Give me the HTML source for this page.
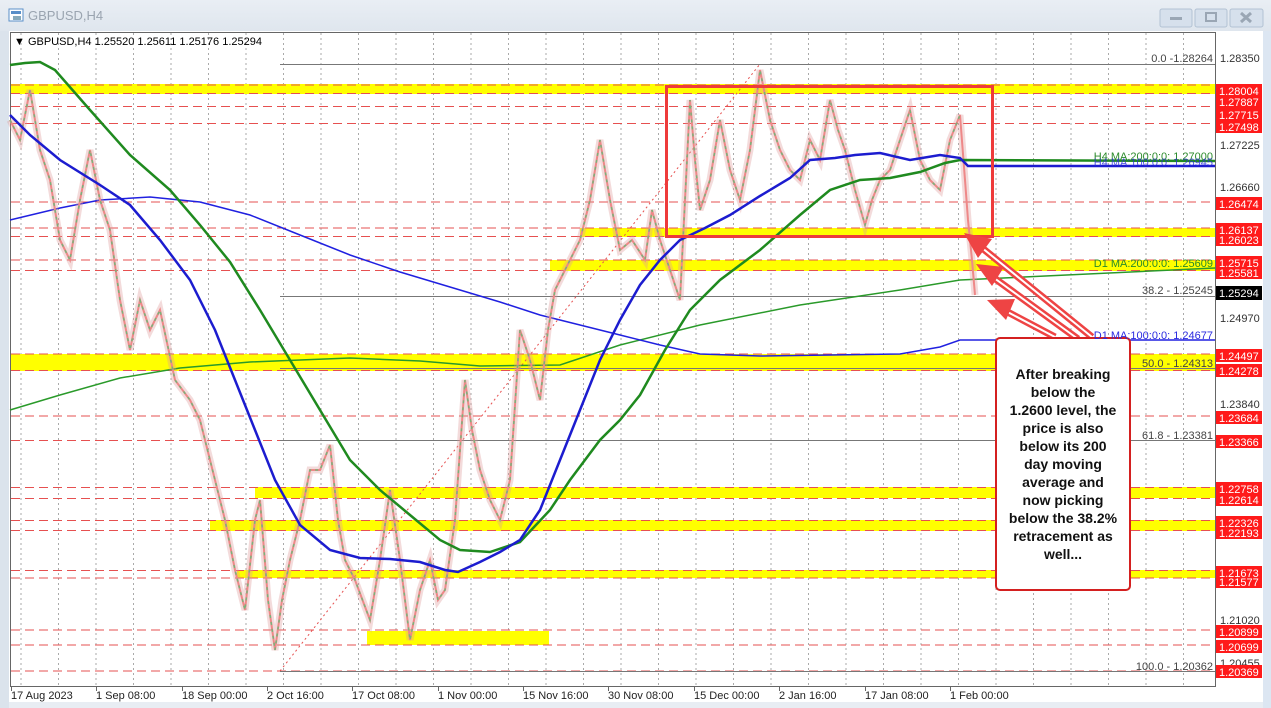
<!DOCTYPE html>
<html><head><meta charset="utf-8"><style>
html,body{margin:0;padding:0;width:1271px;height:708px;overflow:hidden;background:#dbe3ec;font-family:"Liberation Sans",sans-serif}
</style></head><body>
<svg width="1271" height="708" xmlns="http://www.w3.org/2000/svg" style="position:absolute;left:0;top:0">
<defs><linearGradient id="tb" x1="0" y1="0" x2="0" y2="1"><stop offset="0" stop-color="#e9eef4"/><stop offset="1" stop-color="#dfe6ee"/></linearGradient></defs>
<rect x="0" y="0" width="1271" height="708" fill="#dbe3ec"/>
<rect x="0" y="0" width="1271" height="31" fill="url(#tb)"/>
<rect x="9" y="9" width="14" height="12" fill="#fff" stroke="#5a8fc8"/><rect x="11" y="11" width="10" height="3" fill="#5a8fc8"/><rect x="13" y="16" width="8" height="4" fill="#8ab"/>
<text x="28" y="20" font-size="13" fill="#9aa4b0">GBPUSD,H4</text>
<rect x="1160" y="9" width="32" height="18" rx="2" fill="#d6e0ec" stroke="#b3c2d3"/><rect x="1170" y="17" width="12" height="3" fill="#9aa6b4"/>
<rect x="1195" y="9" width="32" height="18" rx="2" fill="#d6e0ec" stroke="#b3c2d3"/><rect x="1206" y="13" width="10" height="8" fill="none" stroke="#9aa6b4" stroke-width="2"/>
<rect x="1230" y="9" width="33" height="18" rx="2" fill="#d6e0ec" stroke="#b3c2d3"/><path d="M1241 13 L1251 22 M1251 13 L1241 22" stroke="#9aa6b4" stroke-width="3"/>
<rect x="9" y="31" width="1254" height="671" fill="#fff"/>
<rect x="1263" y="31" width="8" height="677" fill="#dce6f2"/>
<rect x="9" y="702" width="1254" height="6" fill="#e8edf3"/>
<line x1="10.5" y1="32" x2="10.5" y2="687" stroke="#666"/>
<line x1="10" y1="32.5" x2="1215" y2="32.5" stroke="#666"/>
<line x1="1215.5" y1="32" x2="1215.5" y2="687" stroke="#666"/>
<line x1="10" y1="686.5" x2="1216" y2="686.5" stroke="#666"/>
<g stroke="#aaa" stroke-dasharray="2,3" stroke-width="1">
<path d="M21 33V686M58.5 33V686M96 33V686M133.5 33V686M171 33V686M208.5 33V686M246 33V686M283.5 33V686M321 33V686M358.5 33V686M396 33V686M433.5 33V686M471 33V686M508.5 33V686M546 33V686M583.5 33V686M621 33V686M658.5 33V686M696 33V686M733.5 33V686M771 33V686M808.5 33V686M846 33V686M883.5 33V686M921 33V686M958.5 33V686M996 33V686M1033.5 33V686M1071 33V686M1108.5 33V686M1146 33V686M1183.5 33V686"/>
</g>
<g fill="#ffff00">
<rect x="11" y="84" width="1204" height="10"/>
<rect x="580" y="228" width="635" height="9"/>
<rect x="550" y="260" width="665" height="11"/>
<rect x="11" y="354" width="1204" height="17"/>
<rect x="255" y="487" width="960" height="11"/>
<rect x="210" y="520" width="1005" height="11"/>
<rect x="237" y="570" width="978" height="8"/>
<rect x="367" y="631" width="182" height="14"/>
</g>
<g stroke="#e65050" stroke-dasharray="9,5" stroke-width="1">
<path d="M11 85H1215M11 93.5H1215M11 106.5H1215M11 123.5H1215M11 202H1215M11 228H1215M11 236.5H1215M11 260H1215M11 270.5H1215M11 354H1215M11 370.5H1215M11 416H1215M11 440.5H1215M11 487.5H1215M11 498.5H1215M11 520.5H1215M11 530.5H1215M11 570.5H1215M11 578H1215M11 630H1215M11 645H1215M11 671H1215"/>
</g>
<g stroke="#777" stroke-width="1">
<path d="M280 64.5H1215M280 296.5H1215M280 368.5H1215M280 440.5H1215M280 671.5H1215"/>
</g>
<path d="M280 671 L760 64" stroke="#e65050" stroke-dasharray="2,3" fill="none"/>
<polyline fill="none" stroke="#2a9a2a" stroke-width="1.5" points="10,410 60,395 120,378 180,368 250,362 300,360 350,358 420,361 480,366 560,365 620,345 700,325 800,305 900,290 960,280 1215,268"/>
<polyline fill="none" stroke="#2020e0" stroke-width="1.5" points="10,220 60,208 100,200 150,197 200,202 250,215 300,235 350,255 400,272 450,287 500,302 540,315 580,325 620,335 660,345 700,354 760,356 900,354 940,347 960,340 1215,340"/>
<polyline fill="none" stroke="#d99" stroke-width="7" stroke-opacity="0.35" points="10,120 20,140 30,90 40,150 50,180 60,240 70,260 80,200 90,150 100,200 110,230 120,300 130,350 140,300 150,330 160,310 175,380 190,400 200,420 210,460 215,480 225,520 235,570 245,610 255,520 260,500 268,600 275,650 282,600 290,560 300,520 310,470 320,470 330,445 338,520 345,560 355,580 370,620 380,560 390,490 400,560 410,640 420,590 430,560 438,600 445,590 455,520 465,380 472,430 480,470 490,500 500,520 510,480 520,330 530,360 540,400 548,330 555,290 565,270 580,240 590,200 600,140 610,200 620,250 632,240 645,260 652,210 660,240 670,270 680,300 685,200 690,100 695,160 700,210 710,180 720,120 730,170 740,200 750,150 760,70 770,120 780,150 790,170 800,180 810,140 820,160 830,100 838,130 845,150 855,190 865,225 872,200 880,180 890,170 900,140 910,110 920,160 930,180 940,190 950,140 960,115 965,180 968,220 972,260 975,295"/>
<polyline fill="none" stroke="#e88" stroke-width="2" points="10,120 20,140 30,90 40,150 50,180 60,240 70,260 80,200 90,150 100,200 110,230 120,300 130,350 140,300 150,330 160,310 175,380 190,400 200,420 210,460 215,480 225,520 235,570 245,610 255,520 260,500 268,600 275,650 282,600 290,560 300,520 310,470 320,470 330,445 338,520 345,560 355,580 370,620 380,560 390,490 400,560 410,640 420,590 430,560 438,600 445,590 455,520 465,380 472,430 480,470 490,500 500,520 510,480 520,330 530,360 540,400 548,330 555,290 565,270 580,240 590,200 600,140 610,200 620,250 632,240 645,260 652,210 660,240 670,270 680,300 685,200 690,100 695,160 700,210 710,180 720,120 730,170 740,200 750,150 760,70 770,120 780,150 790,170 800,180 810,140 820,160 830,100 838,130 845,150 855,190 865,225 872,200 880,180 890,170 900,140 910,110 920,160 930,180 940,190 950,140 960,115 965,180 968,220 972,260 975,295"/>
<polyline fill="none" stroke="#7ab27a" stroke-width="1.5" stroke-dasharray="3,4" points="10,120 20,140 30,90 40,150 50,180 60,240 70,260 80,200 90,150 100,200 110,230 120,300 130,350 140,300 150,330 160,310 175,380 190,400 200,420 210,460 215,480 225,520 235,570 245,610 255,520 260,500 268,600 275,650 282,600 290,560 300,520 310,470 320,470 330,445 338,520 345,560 355,580 370,620 380,560 390,490 400,560 410,640 420,590 430,560 438,600 445,590 455,520 465,380 472,430 480,470 490,500 500,520 510,480 520,330 530,360 540,400 548,330 555,290 565,270 580,240 590,200 600,140 610,200 620,250 632,240 645,260 652,210 660,240 670,270 680,300 685,200 690,100 695,160 700,210 710,180 720,120 730,170 740,200 750,150 760,70 770,120 780,150 790,170 800,180 810,140 820,160 830,100 838,130 845,150 855,190 865,225 872,200 880,180 890,170 900,140 910,110 920,160 930,180 940,190 950,140 960,115"/>
<polyline fill="none" stroke="#1f8a1f" stroke-width="2.5" points="10,65 25,63 40,62 55,70 90,110 130,155 170,190 200,225 230,262 260,310 290,360 320,410 350,460 380,490 410,515 440,540 460,550 490,552 520,542 550,510 570,480 600,440 620,420 640,395 665,350 690,310 720,280 760,250 800,215 830,190 860,180 890,178 920,172 945,163 960,160 1215,161"/>
<polyline fill="none" stroke="#1c1ccf" stroke-width="2.5" points="10,115 30,135 60,160 100,185 130,205 160,240 190,280 215,330 235,380 255,430 275,480 300,525 330,550 360,558 390,559 420,562 445,570 458,572 480,562 500,552 520,540 540,510 560,460 580,410 600,360 620,320 640,285 660,260 680,240 705,228 730,215 760,196 790,178 810,160 835,158 855,155 880,153 910,160 940,155 960,158 968,166 1215,166"/>
<rect x="666.5" y="86.5" width="326" height="150" fill="none" stroke="#ee3b3b" stroke-width="3"/>
<g>
<path d="M1092 337 L976 243" stroke="#ee4444" stroke-width="7"/>
<path d="M1092 337 L976 243" stroke="#fff" stroke-width="2"/>
<path d="M1078 339 L990 275" stroke="#ee4444" stroke-width="7"/>
<path d="M1078 339 L990 275" stroke="#fff" stroke-width="2"/>
<path d="M1055 337 L1000 308" stroke="#ee4444" stroke-width="7"/>
<path d="M1055 337 L1000 308" stroke="#fff" stroke-width="2"/>
<polygon points="964,233 992,239 978,258" fill="#ee4444"/>
<polygon points="976,264 1004,267 992,286" fill="#ee4444"/>
<polygon points="987,300 1015,299 1006,320" fill="#ee4444"/>
</g>
<rect x="996" y="338" width="134" height="252" rx="4" fill="#fff" stroke="#d42020" stroke-width="2"/>
<g font-size="14" font-weight="bold" fill="#111" text-anchor="middle">
<text x="1063" y="379">After breaking</text>
<text x="1063" y="397">below the</text>
<text x="1063" y="415">1.2600 level, the</text>
<text x="1063" y="433">price is also</text>
<text x="1063" y="451">below its 200</text>
<text x="1063" y="469">day moving</text>
<text x="1063" y="487">average and</text>
<text x="1063" y="505">now picking</text>
<text x="1063" y="523">below the 38.2%</text>
<text x="1063" y="541">retracement as</text>
<text x="1063" y="559">well...</text>
</g>
<text x="14" y="45" font-size="11" fill="#000">▼ GBPUSD,H4  1.25520 1.25611 1.25176 1.25294</text>
<g font-size="11" text-anchor="end" fill="#444">
<text x="1213" y="62">0.0 -1.28264</text>
<text x="1213" y="294">38.2 - 1.25245</text>
<text x="1213" y="367">50.0 - 1.24313</text>
<text x="1213" y="439">61.8 - 1.23381</text>
<text x="1213" y="670">100.0 - 1.20362</text>
</g>
<g font-size="11" text-anchor="end">
<text x="1213" y="160" fill="#2a8a2a">H4 MA:200:0:0: 1.27000</text>
<text x="1213" y="166" fill="#2a2ae0" opacity="0.8">H4 MA:100:0:0: 1.26945</text>
<text x="1213" y="267" fill="#2a8a2a">D1 MA:200:0:0: 1.25609</text>
<text x="1213" y="339" fill="#2a2ae0">D1 MA:100:0:0: 1.24677</text>
</g>
<g font-size="11" fill="#333">
<text x="1220" y="62">1.28350</text>
<text x="1220" y="149">1.27225</text>
<text x="1220" y="191">1.26660</text>
<text x="1220" y="322">1.24970</text>
<text x="1220" y="408">1.23840</text>
<text x="1220" y="624">1.21020</text>
<text x="1220" y="667">1.20455</text>
</g>
<g fill="#ff1a1a">
<rect x="1216" y="84" width="46" height="13"/><rect x="1216" y="95" width="46" height="13"/><rect x="1216" y="108" width="46" height="13"/>
<rect x="1216" y="120" width="46" height="13"/><rect x="1216" y="197" width="46" height="13"/>
<rect x="1216" y="223" width="46" height="13"/><rect x="1216" y="233" width="46" height="13"/>
<rect x="1216" y="256" width="46" height="13"/><rect x="1216" y="266" width="46" height="13"/>
<rect x="1216" y="349" width="46" height="13"/><rect x="1216" y="364" width="46" height="13"/>
<rect x="1216" y="411" width="46" height="13"/><rect x="1216" y="435" width="46" height="13"/>
<rect x="1216" y="482" width="46" height="13"/><rect x="1216" y="493" width="46" height="13"/>
<rect x="1216" y="516" width="46" height="13"/><rect x="1216" y="526" width="46" height="13"/>
<rect x="1216" y="566" width="46" height="13"/><rect x="1216" y="575" width="46" height="13"/>
<rect x="1216" y="625" width="46" height="13"/><rect x="1216" y="640" width="46" height="13"/>
<rect x="1216" y="665" width="46" height="13"/>
</g>
<rect x="1216" y="286" width="46" height="14" fill="#000"/>
<g font-size="11" fill="#fff">
<text x="1219" y="95">1.28004</text><text x="1219" y="106">1.27887</text><text x="1219" y="119">1.27715</text>
<text x="1219" y="131">1.27498</text><text x="1219" y="208">1.26474</text>
<text x="1219" y="234">1.26137</text><text x="1219" y="244">1.26023</text>
<text x="1219" y="267">1.25715</text><text x="1219" y="277">1.25581</text>
<text x="1219" y="297">1.25294</text>
<text x="1219" y="360">1.24497</text><text x="1219" y="375">1.24278</text>
<text x="1219" y="422">1.23684</text><text x="1219" y="446">1.23366</text>
<text x="1219" y="493">1.22758</text><text x="1219" y="504">1.22614</text>
<text x="1219" y="527">1.22326</text><text x="1219" y="537">1.22193</text>
<text x="1219" y="577">1.21673</text><text x="1219" y="586">1.21577</text>
<text x="1219" y="636">1.20899</text><text x="1219" y="651">1.20699</text>
<text x="1219" y="676">1.20369</text>
</g>
<g stroke="#666"><path d="M11.5 687v4M96.5 687v4M182.5 687v4M267.5 687v4M352.5 687v4M438.5 687v4M523.5 687v4M608.5 687v4M694.5 687v4M779.5 687v4M865.5 687v4M950.5 687v4"/></g>
<g font-size="11" fill="#222">
<text x="11" y="699">17 Aug 2023</text><text x="96" y="699">1 Sep 08:00</text><text x="182" y="699">18 Sep 00:00</text>
<text x="267" y="699">2 Oct 16:00</text><text x="352" y="699">17 Oct 08:00</text><text x="438" y="699">1 Nov 00:00</text>
<text x="523" y="699">15 Nov 16:00</text><text x="608" y="699">30 Nov 08:00</text><text x="694" y="699">15 Dec 00:00</text>
<text x="779" y="699">2 Jan 16:00</text><text x="865" y="699">17 Jan 08:00</text><text x="950" y="699">1 Feb 00:00</text>
</g>
</svg>
</body></html>
